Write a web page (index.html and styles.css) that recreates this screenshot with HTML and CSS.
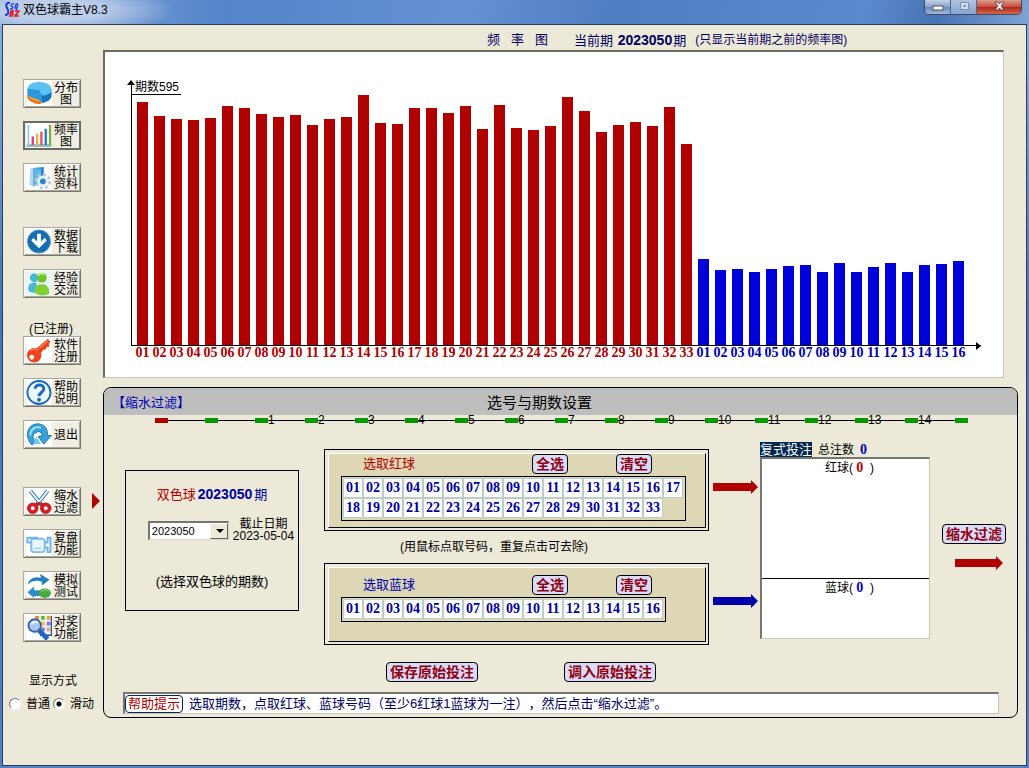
FILE: index.html
```html
<!DOCTYPE html>
<html lang="zh-CN">
<head>
<meta charset="utf-8">
<meta name="viewport" content="width=device-width, initial-scale=1">
<title>双色球霸主V8.3</title>
<link rel="stylesheet" href="styles.css">
</head>
<body>
<div class="window">
  <header class="titlebar">
    <svg class="logo" viewBox="0 0 17 17" aria-hidden="true">
      <path d="M7 2C4 1 2 4 4 7s2 7-2 7" fill="none" stroke="#1637dc" stroke-width="2"/>
      <path d="M11 3H9L8 5l2 1-1 2H7M15 3h-2l-1 4h2l1-4-2 7" fill="none" stroke="#2745e4" stroke-width="1.300"/>
      <path d="M8 10h2l-1 2 1 1-1 2H7zM12 10h4l-4 5h4" fill="none" stroke="#e41325" stroke-width="1.700"/>
    </svg>
    <h1 class="title">双色球霸主V8.3</h1>
    <div class="controls">
      <button class="control" type="button" aria-label="最小化"><svg viewBox="0 0 14 12"><rect x="2" y="5" width="10" height="4" fill="#fff" stroke="#46536b"/></svg></button>
      <button class="control dim" type="button" aria-label="最大化"><svg viewBox="0 0 14 12"><path d="M3.500 1.500h8v7h-8z" fill="#d0dcec" stroke="#798fae"/><path d="M6 4h3v2H6z" fill="#7f97ba"/></svg></button>
      <button class="control close" type="button" aria-label="关闭"><svg viewBox="0 0 14 12"><path d="M3 1h3l1.500 2L9 1h3L9 5l3 4H9L7.500 7 6 9H3l3-4z" fill="#fff" stroke="#5a3038" stroke-width=".8"/></svg></button>
    </div>
  </header>
  <div class="client">
    <nav class="sidebar">
      <div class="group">
        <button class="tool" type="button"><svg viewBox="0 0 26 26"><path d="M1 10v7c3 5 8 7 14 7V13z" fill="#f8a820"/><path d="M1 18c3 4 8 6 14 6v-3C9 21 4 19 1 15z" fill="#ee711b"/><path d="M1 8c0 4 5 6 13 7l2 8c6-1 10-4 10-8V9z" fill="#1675bd"/><path d="M1 8C2 3 7 1 13 1c8 0 13 3 13 8 0 4-5 6-10 6l-3-5z" fill="#5bc1f1"/><path d="M1 8l12 2 3 5v8c-2-5-8-4-15-8z" fill="#2f98dc"/></svg><span>分布<br>图</span></button>
        <button class="tool pressed" type="button"><svg viewBox="0 0 26 26"><path d="M0 22h26v3H0z" fill="#91bfc2"/><path d="M2 2v21" stroke="#9ccce4" stroke-width="2"/><path d="M6.500 14v9" stroke="#d13e8b" stroke-width="2.500"/><path d="M11 11v12" stroke="#e7b437" stroke-width="2.500"/><path d="M15.500 9v14" stroke="#df5475" stroke-width="2.500"/><path d="M20 6v17" stroke="#2584ad" stroke-width="2.500"/><path d="M24.500 2v21" stroke="#82a93f" stroke-width="2.500"/></svg><span>频率<br>图</span></button>
        <button class="tool" type="button"><svg viewBox="0 0 26 26"><path d="M4 3h4v20l-5-2z" fill="#b9d9ed"/><path d="M7 3l11-1v15L7 22z" fill="#258bd0"/><path d="M7 3l8 1v11L7 22z" fill="#65b6e8"/><circle cx="17" cy="17" r="7" fill="none" stroke="#b9c9d4" stroke-width="3" stroke-dasharray="3 2.500"/><circle cx="17" cy="17" r="6" fill="#e6edf2"/><circle cx="17" cy="17" r="3" fill="#2188ca"/></svg><span>统计<br>资料</span></button>
      </div>
      <div class="group">
        <button class="tool" type="button"><svg viewBox="0 0 26 26"><circle cx="13" cy="13" r="12" fill="#176daf" stroke="#4c9bd0"/><path d="M11 5h4v8l4-4 2 3-8 8-8-8 2-3 4 4z" fill="#fff"/></svg><span>数据<br>下载</span></button>
        <button class="tool" type="button"><svg viewBox="0 0 26 26"><path d="M0 0h26v26H0z" fill="#e8f4f8"/><circle cx="8" cy="7" r="4.500" fill="#47b6d7"/><path d="M2 20c-1-7 3-8 8-8l2 9c-3 2-8 2-10-1z" fill="#48b8d8"/><circle cx="16" cy="7" r="5" fill="#6bc52b"/><path d="M9 23c-2-3 1-8 4-9h6c3 1 6 7 4 10-3 2-11 2-14-1z" fill="#82cf32"/><path d="M12 5c1-2 4-3 6-1" fill="none" stroke="#bbed74" stroke-width="2"/></svg><span>经验<br>交流</span></button>
      </div>
      <div class="group registered">
        <p class="side-note">(已注册)</p>
        <button class="tool" type="button"><svg viewBox="0 0 26 26"><path d="M22 1l3 3-2 2 1 3-3 0-1 3-2 0-4 4-5-4z" fill="#ee3c19"/><circle cx="8" cy="18" r="7.500" fill="#ee421c"/><circle cx="5.500" cy="20" r="2.500" fill="#fff"/><path d="M4 13c2-2 6-2 8 0M13 11l9-8" fill="none" stroke="#ff8350" stroke-width="1.500"/></svg><span>软件<br>注册</span></button>
        <button class="tool" type="button"><svg viewBox="0 0 26 26"><circle cx="13" cy="13" r="12" fill="#eef6ff" stroke="#1768bd" stroke-width="2"/><path d="M9 9c0-5 9-5 9 0 0 4-5 4-5 8" fill="none" stroke="#1768c7" stroke-width="3"/><circle cx="13" cy="20.500" r="2" fill="#1768c7"/></svg><span>帮助<br>说明</span></button>
        <button class="tool" type="button"><svg viewBox="0 0 26 26"><path d="M4 22C-3 12 3 1 13 2c7 1 9 6 9 12h4l-8 9-6-8h4c0-5-3-6-6-4-4 2-4 6-1 9l-3 4z" fill="#36a2dc" stroke="#1d75b3"/><path d="M4 14C4 7 10 4 15 6" fill="none" stroke="#a4e1fa" stroke-width="2"/><path d="M10 15l5 8H7z" fill="#72c6ec"/></svg><span>退出</span></button>
      </div>
      <div class="group last">
        <button class="tool current" type="button"><svg viewBox="0 0 26 26"><path d="M4 2l12 15M22 2L10 17" stroke="#276fa8" stroke-width="4"/><path d="M4 2l12 15M22 2L10 17" stroke="#e8f8ff" stroke-width="2"/><circle cx="6.500" cy="20" r="4" fill="#fff" stroke="#d51d24" stroke-width="4"/><circle cx="20" cy="20" r="4" fill="#fff" stroke="#d51d24" stroke-width="4"/><path d="M9 17l4-2 5 2" fill="none" stroke="#bf1e25" stroke-width="3"/></svg><span>缩水<br>过滤</span></button>
        <button class="tool" type="button"><svg viewBox="0 0 26 26"><path d="M5 8h12l2 2v10l-2 2H7l-2-2z" fill="#e7f5ff" stroke="#80bced" stroke-width="2"/><path d="M19 12h3V7h3v15h-3v-5h-3M1 6v6h4M1 7h11" fill="none" stroke="#70b2e8" stroke-width="2"/><path d="M8 18h7" stroke="#8abfed"/></svg><span>复盘<br>功能</span></button>
        <button class="tool" type="button"><svg viewBox="0 0 26 26"><path d="M1 12C3 6 8 3 15 5l-1-4 10 6-8 6v-4C10 7 5 8 1 12z" fill="#247fbe"/><path d="M1 20l7-6v4h6v6H8v2z" fill="#2d8cca"/><ellipse cx="19" cy="21" rx="6.500" ry="5" fill="#48a83b"/><path d="M15 20c2-3 6-3 8-1" fill="none" stroke="#a3da83"/></svg><span>模拟<br>测试</span></button>
        <button class="tool" type="button"><svg viewBox="0 0 26 26"><path d="M7 0h19v21H7z" fill="#edf4fb"/><path d="M9 1h4v4H9z" fill="#ef8428"/><path d="M15 1h4v4h-4z" fill="#5fbb42"/><path d="M21 1h4v4h-4z" fill="#f4a82f"/><path d="M15 7h4v4h-4z" fill="#f2c33b"/><path d="M21 7h4v4h-4zM15 13h4v4h-4z" fill="#8c77ce"/><path d="M21 13h4v4h-4z" fill="#e0a47d"/><path d="M26 1v20H14" fill="none" stroke="#2459a3" stroke-width="1.500"/><path d="M13 16l9 9" stroke="#2365bd" stroke-width="5"/><circle cx="8.500" cy="11" r="6.500" fill="#a9c6ef" stroke="#3e62a7" stroke-width="2"/><path d="M5 10c1-3 4-4 7-2" fill="none" stroke="#eef7ff" stroke-width="2"/></svg><span>对奖<br>功能</span></button>
      </div>
      <fieldset class="mode">
        <legend>显示方式</legend>
        <div class="mode-row">
          <label><input type="radio" name="mode"><span>普通</span></label>
          <label><input type="radio" name="mode" checked><span>滑动</span></label>
        </div>
      </fieldset>
    </nav>
    <main class="main">
      <div class="heading">
        <h2><span>频</span><span>率</span><span>图</span></h2>
        <p>当前期 <b>2023050</b>期</p>
        <p class="small">(只显示当前期之前的频率图)</p>
      </div>
      <section class="chart" aria-label="频率图">
        <div class="plot">
          <p class="scale">期数595</p>
          <div class="bars" id="bars"></div>
        </div>
        <div class="ticks" id="ticks"></div>
      </section>
      <section class="panel">
        <header class="panel-head"><span class="panel-name">【缩水过滤】</span><h2>选号与期数设置</h2></header>
        <ol class="steps" id="steps"></ol>
        <div class="work">
          <section class="period">
            <h3><span class="red">双色球</span><b>2023050</b>期</h3>
            <div class="period-row">
              <div class="picker"><select aria-label="双色球期数"><option>2023050</option></select></div>
              <p>截止日期<br>2023-05-04</p>
            </div>
            <p class="period-note">(选择双色球的期数)</p>
          </section>
          <div class="pools">
            <div class="pool-row">
              <section class="pool"><div class="pool-face">
                <div class="pool-head"><h3 class="red">选取红球</h3><button class="push" type="button">全选</button><button class="push" type="button">清空</button></div>
                <div class="balls red-balls" id="red-balls"></div>
              </div></section>
              <svg class="arrow" viewBox="0 0 45 14" aria-hidden="true"><path d="M0 3h38V0l7 7-7 7v-3H0z" fill="#b00000"/></svg>
            </div>
            <p class="pool-note">(用鼠标点取号码，重复点击可去除)</p>
            <div class="pool-row">
              <section class="pool"><div class="pool-face blue-face">
                <div class="pool-head"><h3>选取蓝球</h3><button class="push" type="button">全选</button><button class="push" type="button">清空</button></div>
                <div class="balls blue-balls" id="blue-balls"></div>
              </div></section>
              <svg class="arrow" viewBox="0 0 45 14" aria-hidden="true"><path d="M0 3h38V0l7 7-7 7v-3H0z" fill="#0000a8"/></svg>
            </div>
          </div>
          <section class="bets">
            <div class="bets-head"><span class="badge">复式投注</span><span>总注数</span><b>0</b></div>
            <div class="bets-box">
              <div class="bet-red">红球( <b class="red">0</b>&nbsp; )</div>
              <div class="bet-blue">蓝球( <b>0</b>&nbsp; )</div>
            </div>
          </section>
          <div class="go">
            <button class="push" type="button">缩水过滤</button>
            <svg class="arrow" viewBox="0 0 48 14" aria-hidden="true"><path d="M0 3h41V0l7 7-7 7v-3H0z" fill="#b00000"/></svg>
          </div>
        </div>
        <div class="actions"><button class="push" type="button">保存原始投注</button><button class="push" type="button">调入原始投注</button></div>
        <div class="help"><span class="help-tag">帮助提示</span><p>选取期数，点取红球、蓝球号码（至少6红球1蓝球为一注），然后点击“缩水过滤”。</p></div>
      </section>
    </main>
  </div>
</div>
<script src="script.js"></script>
</body>
</html>
```
FILE: styles.css
```css
* { box-sizing: border-box; }
body {
  margin: 0;
  font: 12px/14px "Liberation Sans", "Noto Sans CJK SC", sans-serif;
  color: #000;
  text-spacing-trim: space-all;
}
h1, h2, h3, p, ol, fieldset, legend { margin: 0; padding: 0; border: 0; font: inherit; }
button { font: inherit; padding: 0; }
.red { color: #b00000; }

.window {
  display: flex;
  flex-direction: column;
  min-height: 100vh;
  padding: 0 2px 2px;
  background: linear-gradient(#8eb2e3, #4774b8 40%, #537fc3);
}
.titlebar {
  display: flex;
  align-items: flex-start;
  height: 24px;
  margin: 0 -2px;
  padding: 0 7px 0 3px;
  background:
    radial-gradient(ellipse 120px 26px at 54px 10px, #bccdea 40%, transparent),
    linear-gradient(100deg, #89a9d7, #5485ca 22%, #6491d2 45%, #4f7dc1 60%, #5b8ace 84%, #4773b3 91%, #80a4d7);
}
.logo { width: 17px; height: 17px; margin: 1px 3px 0 0; }
.title { line-height: 20px; }
.controls { display: flex; margin-left: auto; border: 1px solid #3a4a68; border-top: 0; border-radius: 0 0 5px 5px; overflow: hidden; }
.control {
  display: grid;
  place-items: center;
  width: 26px;
  height: 14px;
  border: 0;
  border-right: 1px solid #50678c;
  background: linear-gradient(#c3d1e5, #8ba5ca 50%, #6888b5 51%, #a0b8d8);
}
.control svg { width: 14px; height: 12px; }
.dim { background: linear-gradient(#afc3e0, #88a5cf); }
.close { width: 44px; border-right: 0; background: linear-gradient(#dd9b8c, #c54c3c 50%, #ad271b 51%, #d5664b); }

.client {
  display: grid;
  grid-template-columns: 100px 1fr;
  flex: 1;
  border: 1px solid #28405f;
  background: #ece9d8;
}
.sidebar { padding: 54px 0 0 20px; }
.group { display: flex; flex-direction: column; gap: 13px; margin-bottom: 35px; }
.registered { position: relative; padding-top: 3px; margin-bottom: 38px; }
.last { margin-bottom: 32px; }
.side-note { position: absolute; bottom: 100%; left: 6px; margin-bottom: -3px; }
.tool {
  position: relative;
  display: flex;
  align-items: center;
  gap: 2px;
  width: 58px;
  height: 29px;
  border: 1px solid;
  border-color: #aaa99f #77766f #77766f #aaa99f;
  box-shadow: inset 1px 1px #fff, inset -1px -1px #aaa89c;
  background: #f0eee3;
  color: #000;
  padding: 1px 2px;
  line-height: 12px;
}
.tool svg { flex: none; width: 26px; height: 25px; background: #fff; }
.tool span { flex: 1; white-space: nowrap; }
.pressed { border: 2px solid #6b6b66; box-shadow: none; padding: 0 1px; }
.current::after {
  content: "";
  position: absolute;
  left: 68px;
  top: 5px;
  border: solid transparent;
  border-width: 8px 0 8px 8px;
  border-left-color: #b00000;
}
.mode { margin-left: -14px; min-width: 0; }
.mode legend { margin-left: 20px; }
.mode-row { display: flex; gap: 3px; padding-top: 9px; }
.mode label { display: flex; align-items: center; gap: 5px; white-space: nowrap; }
.mode input {
  appearance: none;
  width: 12px;
  height: 12px;
  margin: 0;
  border: 1px solid;
  border-color: #77766f #f8f7f0 #f8f7f0 #77766f;
  border-radius: 50%;
  background: #fff;
}
.mode input:checked { background: radial-gradient(circle, #000 2px, #fff 3px); }

.main { min-width: 0; padding: 0 8px 46px 0; }
.heading {
  display: flex;
  align-items: center;
  height: 25px;
  padding: 5px 0 0 384px;
  font-size: 13px;
  white-space: nowrap;
  color: #000060;
}
.heading h2 { display: flex; gap: 11px; margin-right: 26px; }
.heading b { margin: 0 1px; font-size: 14px; }
.heading .small { margin-left: 9px; font-size: 12px; }

.chart {
  margin-right: 14px;
  padding: 28px 22px 17px 26px;
  border: solid #6b6b60;
  border-width: 2px 1px 1px 2px;
  border-right-color: #c8c6ba;
  border-bottom-color: #c8c6ba;
  background: #fff;
}
.plot {
  position: relative;
  border-bottom: 1px solid #000;
  background: linear-gradient(#000, #000) 0 4px / 1px 100% no-repeat;
}
.plot::before, .plot::after { content: ""; position: absolute; border: solid transparent; }
.plot::before { left: -4px; top: 0; border-width: 0 4px 5px; border-bottom-color: #000; }
.plot::after { right: 0; bottom: -5px; border-width: 4px 0 4px 5px; border-left-color: #000; }
.scale { width: 50px; padding-left: 4px; border-bottom: 1px solid #000; white-space: nowrap; }
.bars { display: flex; align-items: flex-end; height: 250px; padding: 0 14px 0 3px; }
.bar { flex: 1; margin: 0 3px; background: #b00000; }
.bar.blue { background: #0000d8; }
.ticks { display: flex; padding: 0 14px 0 3px; font: bold 14px/14px "Liberation Serif", serif; color: #b00000; }
.ticks span { flex: 1 0 0; min-width: 0; display: flex; justify-content: center; }
.ticks .blue { color: #0000b0; }

.panel { margin-top: 9px; border: 1px solid #000; border-radius: 8px; overflow: hidden; }
.panel-head {
  display: grid;
  grid-template-columns: 375px 1fr;
  align-items: center;
  height: 27px;
  padding: 3px 0 0 8px;
  background: #bebebe;
}
.panel-name { font-size: 13px; color: #0000b0; }
.panel-head h2 { font-size: 15px; }
.steps {
  display: flex;
  height: 11px;
  margin: 0 49px 0 51px;
  list-style: none;
  background: linear-gradient(#000, #000) 0 5px / 100% 1px no-repeat;
}
.steps li { display: flex; flex: 1; align-items: center; line-height: 11px; }
.steps li:last-child { flex: none; }
.steps li::before { content: ""; width: 13px; height: 5px; background: #009a00; }
.steps li:first-child::before { background: #b00000; }

.work {
  display: grid;
  grid-template-columns: minmax(174px, 174fr) minmax(461px, 461fr) minmax(170px, 170fr) minmax(76px, 76fr);
  align-items: start;
  padding: 15px 11px 0 21px;
}
.period { height: 141px; margin-top: 29px; border: 1px solid #000; padding-top: 15px; text-align: center; }
.period h3 { font-size: 13px; line-height: 16px; color: #0000a0; }
.period b { margin: 0 2px; font-size: 14px; }
.period-row { display: flex; justify-content: center; align-items: center; gap: 4px; margin-top: 15px; padding-left: 18px; }
.period-row p { line-height: 12px; white-space: nowrap; }
.picker { position: relative; width: 81px; flex: none; }
.picker select {
  appearance: none;
  display: block;
  width: 100%;
  height: 19px;
  padding: 0 2px;
  border: solid;
  border-width: 2px 1px 1px 2px;
  border-color: #77766f #d8d6c8 #d8d6c8 #77766f;
  border-radius: 0;
  background: #fff;
  color: #000;
  font: 11px/14px "Liberation Sans", sans-serif;
}
.picker::before {
  content: "";
  position: absolute;
  inset: 2px 1px 1px auto;
  width: 16px;
  border: 1px solid;
  border-color: #fff #66655f #66655f #fff;
  background: #ece9d8;
  pointer-events: none;
}
.picker::after {
  content: "";
  position: absolute;
  right: 5px;
  top: 8px;
  border: solid transparent;
  border-width: 4px 4px 0;
  border-top-color: #000;
  pointer-events: none;
}
.period-note { margin-top: 33px; font-size: 13px; }

.pools { padding: 8px 2px 0 25px; }
.pool-row { display: flex; align-items: flex-start; gap: 4px; }
.pool { flex: 1; border: 1px solid #000; padding: 3px 2px 2px 3px; }
.pool-face {
  height: 75px;
  padding: 0 12px;
  border: 1px solid #000;
  border-top-color: #fff;
  border-left-color: #fff;
  background: #ddd7b5;
}
.blue-face { padding-top: 7px; }
.pool-head { display: flex; align-items: center; padding-left: 22px; font-size: 13px; color: #0000b0; }
.pool-head h3 { margin-right: 117px; }
.pool-head .push + .push { margin-left: 48px; }
.push {
  height: 20px;
  padding: 0 3px;
  border: 1px solid #000;
  border-radius: 4px;
  background: #d8dcf8;
  color: #900010;
  font-size: 14px;
  font-weight: bold;
  line-height: 16px;
  white-space: nowrap;
}
.balls { display: grid; width: max-content; margin-top: 2px; padding: 1px 2px 2px 1px; border: 1px solid #000; }
.red-balls { grid-template-columns: repeat(17, 20px); }
.blue-balls { grid-template-columns: repeat(16, 20px); }
.ball {
  height: 20px;
  border: 1px solid #b9cfc6;
  background: #fff;
  color: #0000a0;
  font: bold 14px/16px "Liberation Serif", serif;
}
.arrow { flex: none; width: 45px; height: 14px; margin-top: 31px; }
.pool-note { padding: 9px 94px 9px 0; text-align: center; }

.bets-head { display: flex; align-items: flex-end; gap: 6px; height: 16px; white-space: nowrap; }
.badge { background: #002850; color: #fff; font-size: 13px; line-height: 15px; }
.bets b { color: #0000b0; font: bold 14px/14px "Liberation Serif", serif; }
.bets b.red { color: #b00000; }
.bets-box {
  border: solid #77766f;
  border-width: 2px 1px 1px 2px;
  border-right-color: #c8c6ba;
  border-bottom-color: #c8c6ba;
  background: #fff;
  text-align: center;
}
.bets-box > div { padding: 2px 0 0 8px; }
.bet-red { height: 120px; border-bottom: 1px solid #000; }
.bet-blue { height: 59px; }
.go { display: flex; flex-direction: column; align-items: flex-end; padding-top: 83px; }
.go .arrow { width: 48px; margin: 12px 3px 0 0; }

.actions { display: flex; gap: 86px; padding: 17px 0 0 282px; }
.actions .push { width: 92px; }
.help {
  display: flex;
  align-items: center;
  gap: 6px;
  min-height: 22px;
  margin: 10px 18px 3px 19px;
  border: solid #77766f;
  border-width: 2px 1px 1px 2px;
  border-right-color: #c8c6ba;
  border-bottom-color: #c8c6ba;
  background: #fff;
  font-size: 13px;
  color: #000060;
}
.help-tag { padding: 0 2px; border: 1px solid #002850; border-radius: 4px; color: #b00000; line-height: 16px; white-space: nowrap; }
```
FILE: script.js
```js
const red = [243, 229, 226, 225, 227, 239, 237, 231, 228, 230, 220, 226, 228, 250, 222, 221, 237, 237, 232, 239, 216, 240, 217, 215, 219, 248, 234, 213, 220, 223, 219, 238, 201];
const blue = [86, 75, 76, 73, 76, 79, 80, 73, 82, 73, 78, 82, 73, 80, 81, 84];
const pad = (n) => String(n).padStart(2, "0");

function add(parent, tag, className, text) {
  const node = document.createElement(tag);
  if (className) node.className = className;
  if (text) node.textContent = text;
  document.getElementById(parent).append(node);
  return node;
}

for (const [kind, values] of [["red", red], ["blue", blue]]) {
  values.forEach((value, i) => {
    add("bars", "div", "bar " + kind, "").style.height = value + "px";
    add("ticks", "span", kind === "blue" ? "blue" : "", pad(i + 1));
    add(kind + "-balls", "button", "ball", pad(i + 1)).type = "button";
  });
}

for (let i = 0; i < 17; i++) {
  add("steps", "li", "", i > 1 && i < 16 ? String(i - 1) : "");
}
```
